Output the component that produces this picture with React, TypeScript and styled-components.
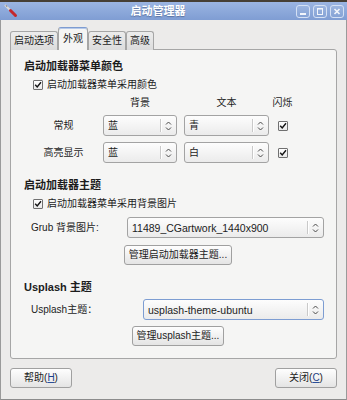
import React from "react";
import styled, { createGlobalStyle } from "styled-components";

const GlobalStyle = createGlobalStyle`
  html, body {
    margin: 0;
    padding: 0;
    background: #3f3a33;
  }
  body {
    font-family: "Liberation Sans", "Noto Sans CJK SC", sans-serif;
    font-size: 10px;
    color: #1c1c1c;
  }
`;

export default function App() {
  return (
    <>
      <GlobalStyle />
      <Window>
        <TitleBar>
          <AppIcon>
            <svg width="14" height="14" viewBox="0 0 14 14">
              <path d="M1.5 1.5 L6 6" stroke="#d8d8d8" strokeWidth="2" strokeLinecap="round" />
              <path d="M2 1 L3 3" stroke="#8a8a8a" strokeWidth="1" />
              <path d="M6.5 6.5 L11.5 11.5" stroke="#c4282d" strokeWidth="3" strokeLinecap="round" />
            </svg>
          </AppIcon>
          <Title>启动管理器</Title>
          <WinButtons>
            <WinButton>
              <svg width="12" height="11" viewBox="0 0 12 11">
                <rect x="3" y="7" width="6" height="2" fill="#f2f5fb" />
              </svg>
            </WinButton>
            <WinButton>
              <svg width="12" height="11" viewBox="0 0 12 11">
                <rect x="3.5" y="2.5" width="5" height="6" fill="none" stroke="#f2f5fb" strokeWidth="1" />
                <rect x="3" y="2" width="6" height="1.5" fill="#f2f5fb" />
              </svg>
            </WinButton>
            <WinButton>
              <svg width="12" height="11" viewBox="0 0 12 11">
                <path d="M3.5 3 L8.5 8 M8.5 3 L3.5 8" stroke="#f2f5fb" strokeWidth="1.6" />
              </svg>
            </WinButton>
          </WinButtons>
        </TitleBar>

        <Body>
          <Tabs>
            <Tab>启动选项</Tab>
            <Tab $active>外观</Tab>
            <Tab>安全性</Tab>
            <Tab>高级</Tab>
          </Tabs>

          <Panel>
            <Section>
              <SectionTitle>启动加载器菜单颜色</SectionTitle>
              <CheckRow>
                <CheckBox checked />
                <span>启动加载器菜单采用颜色</span>
              </CheckRow>
              <ColorGrid>
                <span />
                <HeadCell $w={74}>背景</HeadCell>
                <HeadCell $w={85}>文本</HeadCell>
                <HeadCell $w={21}>闪烁</HeadCell>

                <RowLabel>常规</RowLabel>
                <Combo $w={74} value="蓝" />
                <Combo $w={85} value="青" />
                <CheckCell><CheckBox checked /></CheckCell>

                <RowLabel>高亮显示</RowLabel>
                <Combo $w={74} value="蓝" />
                <Combo $w={85} value="白" />
                <CheckCell><CheckBox checked /></CheckCell>
              </ColorGrid>
            </Section>

            <Section>
              <SectionTitle>启动加载器主题</SectionTitle>
              <CheckRow>
                <CheckBox checked />
                <span>启动加载器菜单采用背景图片</span>
              </CheckRow>
              <FieldRow $top={6}>
                <FieldLabel $w={96}>Grub 背景图片:</FieldLabel>
                <Combo value="11489_CGartwork_1440x900" latin />
              </FieldRow>
              <ButtonRow $top={7}>
                <PushButton>管理启动加载器主题...</PushButton>
              </ButtonRow>
            </Section>

            <Section>
              <SectionTitle>Usplash 主题</SectionTitle>
              <FieldRow $top={5}>
                <FieldLabel $w={112}>Usplash主题：</FieldLabel>
                <Combo value="usplash-theme-ubuntu" latin focused />
              </FieldRow>
              <ButtonRow $top={6}>
                <PushButton>管理usplash主题...</PushButton>
              </ButtonRow>
            </Section>
          </Panel>

          <Footer>
            <DialogButton>
              帮助(<u>H</u>)
            </DialogButton>
            <DialogButton>
              关闭(<u>C</u>)
            </DialogButton>
          </Footer>
        </Body>
      </Window>
    </>
  );
}

function CheckBox({ checked }: { checked?: boolean }) {
  return (
    <CheckBoxBox>
      {checked && (
        <svg width="8" height="8" viewBox="0 0 8 8">
          <path d="M1.2 3.8 L3.2 6 L7 1.2" fill="none" stroke="#141414" strokeWidth="1.4" />
        </svg>
      )}
    </CheckBoxBox>
  );
}

function Combo({
  value,
  $w,
  latin,
  focused,
}: {
  value: string;
  $w?: number;
  latin?: boolean;
  focused?: boolean;
}) {
  return (
    <ComboBox $w={$w} $focused={focused}>
      <ComboValue $latin={latin}>{value}</ComboValue>
      <ComboSep />
      <ComboArrow>
        <svg width="7" height="10" viewBox="0 0 7 10">
          <path
            d="M1 3.5 L3.5 1 L6 3.5 M1 6.5 L3.5 9 L6 6.5"
            fill="none"
            stroke="#4a4a4a"
            strokeWidth="1"
          />
        </svg>
      </ComboArrow>
    </ComboBox>
  );
}

// window frame
const Window = styled.div`
  width: 347px;
  height: 400px;
  display: flex;
  flex-direction: column;
  overflow: hidden;
`;

const TitleBar = styled.div`
  height: 20px;
  box-sizing: border-box;
  border-top: 2px solid #463f35;
  background: linear-gradient(#9bb5e2, #7f9dd3);
  display: flex;
  align-items: center;
  padding: 0 3px 0 4px;
`;

const AppIcon = styled.div`
  width: 16px;
  height: 14px;
  display: flex;
  align-items: center;
`;

const Title = styled.div`
  flex: 1;
  text-align: center;
  color: #ffffff;
  font-size: 11px;
  font-weight: bold;
  line-height: 14px;
  text-shadow: 0 1px 1px rgba(40, 60, 100, 0.45);
`;

const WinButtons = styled.div`
  display: flex;
  gap: 3px;
  padding-top: 1px;
`;

const WinButton = styled.div`
  width: 14px;
  height: 13px;
  box-sizing: border-box;
  border: 1px solid #d4e0f4;
  border-radius: 3px;
  background: linear-gradient(#9cb5df, #86a3d6);
  display: flex;
  align-items: center;
  justify-content: center;
`;

const Body = styled.div`
  flex: 1;
  display: flex;
  flex-direction: column;
  background: #ecebea;
  border-left: 1px solid #9a9a9a;
  border-right: 1px solid #9a9a9a;
  border-bottom: 1px solid #8c8c8c;
  padding: 7px 9px 0 9px;
`;

// notebook
const Tabs = styled.div`
  display: flex;
  align-items: flex-end;
  height: 23px;
  margin-bottom: -1px;
  position: relative;
  z-index: 1;
`;

const Tab = styled.div<{ $active?: boolean }>`
  height: ${(p) => (p.$active ? 23 : 19)}px;
  box-sizing: border-box;
  padding: 0 ${(p) => (p.$active ? 4 : 3)}px;
  display: flex;
  align-items: center;
  line-height: 14px;
  border: 1px solid #a6a6a6;
  border-bottom: none;
  border-radius: 3px 3px 0 0;
  background: ${(p) =>
    p.$active ? "#f5f5f4" : "linear-gradient(#ececec, #dcdcdc)"};
  ${(p) =>
    p.$active &&
    `border-top-color: #7e9cd0; box-shadow: inset 0 1px 0 #b6c9ea;`}
`;

const Panel = styled.div`
  height: 310px;
  box-sizing: border-box;
  border: 1px solid #a6a6a6;
  border-radius: 0 3px 3px 3px;
  background: #f5f5f4;
  padding: 9px 4px 0 13px;
  display: flex;
  flex-direction: column;
`;

const Section = styled.div`
  display: flex;
  flex-direction: column;

  & + & {
    margin-top: 15px;
  }
`;

const SectionTitle = styled.div`
  font-size: 11px;
  font-weight: bold;
  line-height: 14px;
  height: 14px;
`;

const CheckRow = styled.div`
  display: flex;
  align-items: center;
  gap: 4px;
  height: 14px;
  line-height: 14px;
  margin: 5px 0 0 9px;
`;

const CheckBoxBox = styled.span`
  width: 10px;
  height: 10px;
  box-sizing: border-box;
  border: 1px solid #707070;
  border-radius: 1px;
  background: linear-gradient(#ffffff, #e9e9e9);
  display: inline-flex;
  align-items: center;
  justify-content: center;
`;

const ColorGrid = styled.div`
  display: grid;
  grid-template-columns: 79px 81px 88px 21px;
  grid-template-rows: 12px 21px 21px;
  row-gap: 6px;
  margin-top: 5px;
  align-items: center;
`;

const HeadCell = styled.div<{ $w: number }>`
  width: ${(p) => p.$w}px;
  text-align: center;
  line-height: 12px;
`;

const RowLabel = styled.div`
  text-align: center;
  line-height: 14px;
`;

const CheckCell = styled.div`
  display: flex;
  justify-content: center;
`;

// combo box
const ComboBox = styled.div<{ $w?: number; $focused?: boolean }>`
  ${(p) => (p.$w ? `width: ${p.$w}px;` : "flex: 1;")}
  height: 21px;
  box-sizing: border-box;
  border: 1px solid ${(p) => (p.$focused ? "#7d9dd2" : "#a3a3a3")};
  border-radius: 3px;
  background: linear-gradient(#fdfdfd, #ebebeb);
  display: flex;
  align-items: center;
  padding-left: 4px;
`;

const ComboValue = styled.span<{ $latin?: boolean }>`
  flex: 1;
  font-size: ${(p) => (p.$latin ? 10.5 : 10)}px;
  line-height: 14px;
  white-space: nowrap;
  overflow: hidden;
`;

const ComboSep = styled.span`
  width: 1px;
  height: 13px;
  background: #c9c9c9;
  box-shadow: 1px 0 0 #ffffff;
`;

const ComboArrow = styled.span`
  width: 15px;
  display: flex;
  justify-content: center;
  align-items: center;
`;

const FieldRow = styled.div<{ $top: number }>`
  display: flex;
  align-items: center;
  margin: ${(p) => p.$top}px 8px 0 7px;
`;

const FieldLabel = styled.span<{ $w: number }>`
  width: ${(p) => p.$w}px;
  flex-shrink: 0;
  line-height: 14px;
`;

const ButtonRow = styled.div<{ $top: number }>`
  display: flex;
  justify-content: center;
  margin-top: ${(p) => p.$top}px;
`;

const PushButton = styled.div`
  height: 20px;
  box-sizing: border-box;
  padding: 0 4px;
  border: 1px solid #a0a0a0;
  border-radius: 3px;
  background: linear-gradient(#fefefe, #e4e4e4);
  display: flex;
  align-items: center;
  line-height: 14px;
`;

const Footer = styled.div`
  display: flex;
  justify-content: space-between;
  padding: 9px 0 11px;
`;

const DialogButton = styled(PushButton)`
  width: 62px;
  justify-content: center;

  u {
    text-decoration-color: #2a4f99;
    color: #1c3f8a;
  }
`;
